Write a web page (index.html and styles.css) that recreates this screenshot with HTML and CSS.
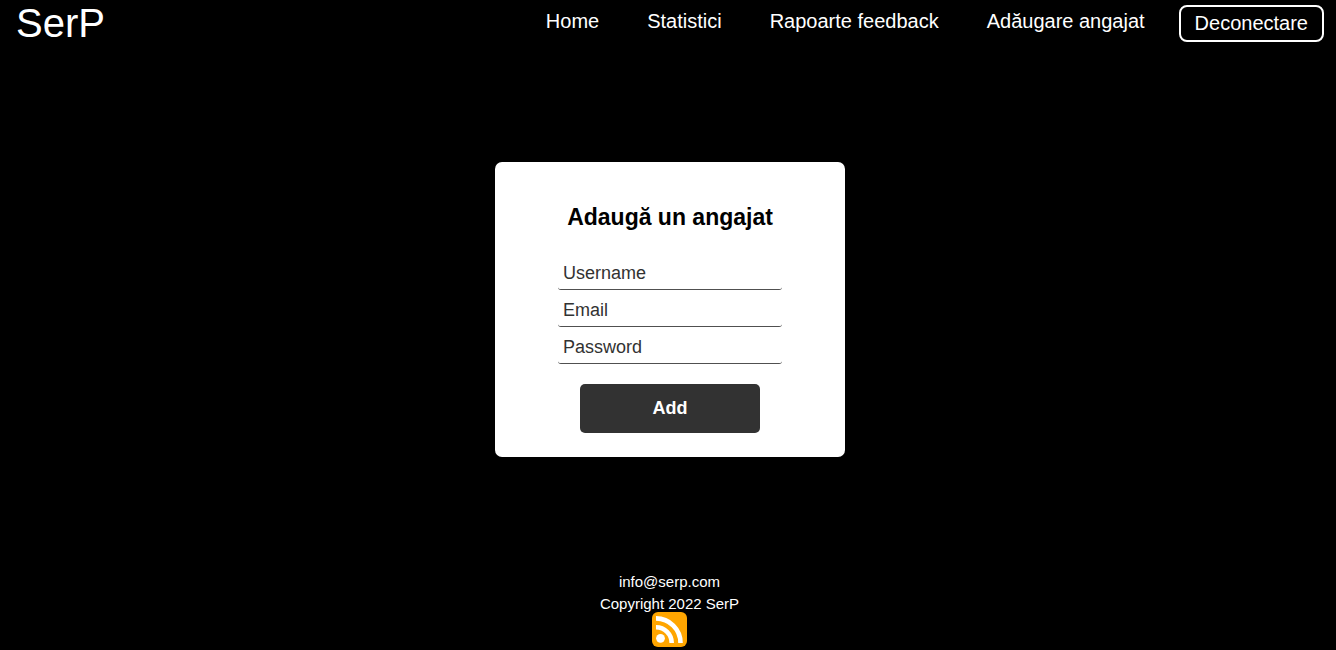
FILE: index.html
```html
<!DOCTYPE html>
<html lang="ro">
<head>
  <meta charset="utf-8">
  <meta name="viewport" content="width=device-width, initial-scale=1">
  <title>SerP</title>
  <link rel="stylesheet" href="styles.css">
</head>
<body class="page">
  <header class="topbar">
    <a class="logo" href="#">SerP</a>
    <nav class="menu">
      <a class="menu-link" href="#">Home</a>
      <a class="menu-link" href="#">Statistici</a>
      <a class="menu-link" href="#">Rapoarte feedback</a>
      <a class="menu-link" href="#">Adăugare angajat</a>
    </nav>
    <button class="logout" type="button">Deconectare</button>
  </header>

  <main class="content">
    <form class="card">
      <h1 class="card-title">Adaugă un angajat</h1>
      <div class="fields">
        <input class="field" type="text" placeholder="Username" aria-label="Username">
        <input class="field" type="email" placeholder="Email" aria-label="Email">
        <input class="field" type="password" placeholder="Password" aria-label="Password">
      </div>
      <button class="submit" type="submit">Add</button>
    </form>
  </main>

  <footer class="footer">
    <p class="footer-line">info@serp.com</p>
    <p class="footer-line">Copyright 2022 SerP</p>
    <a class="rss" href="#" aria-label="RSS">
      <svg class="rss-icon" viewBox="0 0 35 35" aria-hidden="true">
        <rect width="35" height="35" rx="6" fill="#ffa500"/>
        <circle cx="8.5" cy="26.3" r="4.4" fill="#fff"/>
        <path d="M4 15.2A15.7 15.7 0 0 1 19.7 30.9M4 6.4A24.5 24.5 0 0 1 28.5 30.9" fill="none" stroke="#fff" stroke-width="4.6"/>
      </svg>
    </a>
  </footer>
</body>
</html>
```
FILE: styles.css
```css
* {
  box-sizing: border-box;
}

.page {
  display: flex;
  flex-direction: column;
  min-height: 100vh;
  margin: 0;
  background: #000;
  color: #fff;
  font-family: "Liberation Sans", Arial, sans-serif;
}

.topbar {
  display: flex;
  align-items: flex-start;
  padding: 0 12px 0 16px;
}

.logo {
  margin-right: auto;
  color: #fff;
  font-size: 40px;
  line-height: 46px;
  text-decoration: none;
}

.menu {
  display: flex;
  gap: 48px;
  padding: 10px 34px 0 0;
}

.menu-link {
  color: #fff;
  font-size: 20px;
  line-height: 23px;
  text-decoration: none;
}

.logout {
  margin: 5px 0;
  padding: 5px 14px;
  border: 2px solid #fff;
  border-radius: 8px;
  background: transparent;
  color: #fff;
  font: inherit;
  font-size: 20px;
  line-height: 23px;
}

.content {
  display: flex;
  flex: 1;
  align-items: center;
  justify-content: center;
  padding-left: 4px;
}

.card {
  display: flex;
  flex-direction: column;
  align-items: center;
  width: 350px;
  max-width: 100%;
  padding: 41px 16px 24px;
  border-radius: 7px;
  background: #fff;
}

.card-title {
  margin: 0 0 27px;
  color: #000;
  font-size: 23px;
  line-height: 28px;
}

.fields {
  display: grid;
  gap: 5px;
  width: 224px;
  margin-bottom: 20px;
}

.field {
  width: 100%;
  padding: 5px;
  border: 0;
  border-bottom: 1px solid #505050;
  border-radius: 3px;
  background: #fff;
  color: #323232;
  font: inherit;
  font-size: 18px;
  line-height: 21px;
}

.field::placeholder {
  color: #323232;
  opacity: 1;
}

.submit {
  width: 180px;
  padding: 14px;
  border: 0;
  border-radius: 5px;
  background: #323232;
  color: #fff;
  font: inherit;
  font-size: 18px;
  font-weight: bold;
  line-height: 21px;
}

.footer {
  display: flex;
  flex-direction: column;
  align-items: center;
  padding: 1px 0 3px 3px;
}

.footer-line {
  margin: 0;
  font-size: 15px;
  line-height: 17px;
}

.footer-line + .footer-line {
  margin-top: 5px;
}

.rss,
.rss-icon {
  display: block;
  width: 35px;
  height: 35px;
}
```
